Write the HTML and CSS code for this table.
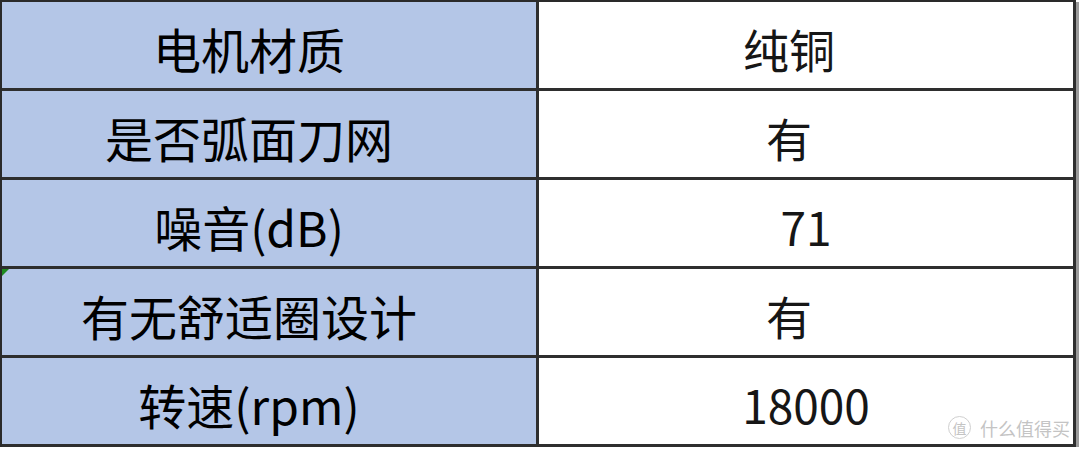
FILE: index.html
```html
<!DOCTYPE html>
<html lang="zh-CN">
<head>
<meta charset="utf-8">
<title>参数表</title>
<link rel="stylesheet" href="styles.css">
</head>
<body>
<div class="sheet">
  <div class="cell label">电机材质</div>
  <div class="cell value cjk">纯铜</div>
  <div class="cell label">是否弧面刀网</div>
  <div class="cell value cjk">有</div>
  <div class="cell label">噪音(dB)</div>
  <div class="cell value">71</div>
  <div class="cell label marked">有无舒适圈设计</div>
  <div class="cell value cjk">有</div>
  <div class="cell label">转速(rpm)</div>
  <div class="cell value">18000</div>
  <div class="watermark">
    <span class="wm-badge">值</span>
    <span class="wm-text">什么值得买</span>
  </div>
</div>
</body>
</html>
```
FILE: styles.css
```css
html, body {
  margin: 0;
  padding: 0;
  background: #ffffff;
}

.sheet {
  position: relative;
  display: grid;
  grid-template-columns: 537px 537px;
  grid-auto-rows: 89px;
  width: max-content;
  border-top: 2px solid #2a2a2a;
  border-left: 2px solid #2a2a2a;
  box-shadow: 3px 2px 0 #9a9a9a;
  font-family: "Noto Sans CJK SC", "Noto Sans", sans-serif;
  color: #000000;
}

.cell {
  display: flex;
  align-items: center;
  justify-content: center;
  border-right: 3px solid #2e2e2e;
  border-bottom: 3px solid #2e2e2e;
  padding-top: 6px;
  box-sizing: border-box;
  white-space: nowrap;
  font-weight: 400;
}

.label {
  background: #b4c6e7;
  font-size: 48px;
  padding-right: 40px;
}

.value {
  background: #ffffff;
  font-size: 46px;
  color: #161616;
}

.value.cjk {
  padding-right: 34px;
}

.marked {
  position: relative;
}

.marked::before {
  content: "";
  position: absolute;
  left: 0;
  top: 0;
  border-top: 7px solid #1f8a1f;
  border-right: 7px solid transparent;
}

.watermark {
  position: absolute;
  right: 6px;
  bottom: 8px;
  display: flex;
  align-items: center;
  gap: 9px;
  color: #c4c4c4;
}

.wm-badge {
  display: flex;
  align-items: center;
  justify-content: center;
  width: 21px;
  height: 21px;
  border: 1.5px solid #cfcfcf;
  border-radius: 50%;
  font-size: 14px;
  line-height: 1;
}

.wm-text {
  font-size: 18px;
  line-height: 1;
}
```
